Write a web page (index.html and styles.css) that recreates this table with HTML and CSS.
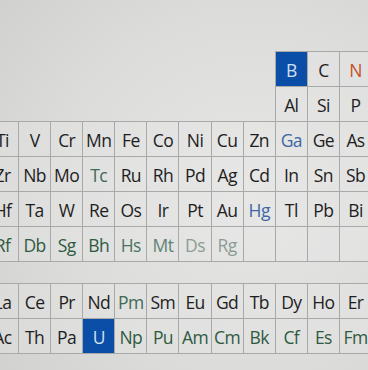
FILE: index.html
```html
<!DOCTYPE html>
<html>
<head>
<meta charset="utf-8">
<link rel="stylesheet" href="styles.css">
</head>
<body>
<div class="page">
  <div class="grid main">
    <div class="cell hl" style="grid-column:10">B</div>
    <div class="cell">C</div>
    <div class="cell orange">N</div>
    <div class="cell" style="grid-column:10">Al</div>
    <div class="cell">Si</div>
    <div class="cell">P</div>

    <div class="cell">Ti</div><div class="cell">V</div><div class="cell">Cr</div><div class="cell">Mn</div>
    <div class="cell">Fe</div><div class="cell">Co</div><div class="cell">Ni</div><div class="cell">Cu</div>
    <div class="cell">Zn</div><div class="cell blue">Ga</div><div class="cell">Ge</div><div class="cell">As</div>

    <div class="cell">Zr</div><div class="cell">Nb</div><div class="cell">Mo</div><div class="cell green1">Tc</div>
    <div class="cell">Ru</div><div class="cell">Rh</div><div class="cell">Pd</div><div class="cell">Ag</div>
    <div class="cell">Cd</div><div class="cell">In</div><div class="cell">Sn</div><div class="cell">Sb</div>

    <div class="cell">Hf</div><div class="cell">Ta</div><div class="cell">W</div><div class="cell">Re</div>
    <div class="cell">Os</div><div class="cell">Ir</div><div class="cell">Pt</div><div class="cell">Au</div>
    <div class="cell blue">Hg</div><div class="cell">Tl</div><div class="cell">Pb</div><div class="cell">Bi</div>

    <div class="cell green">Rf</div><div class="cell green">Db</div><div class="cell green">Sg</div><div class="cell green">Bh</div>
    <div class="cell green2">Hs</div><div class="cell green3">Mt</div><div class="cell faded">Ds</div><div class="cell faded">Rg</div>
    <div class="cell"></div><div class="cell"></div><div class="cell"></div><div class="cell"></div>
  </div>

  <div class="grid series">
    <div class="cell">La</div><div class="cell">Ce</div><div class="cell">Pr</div><div class="cell">Nd</div>
    <div class="cell green1">Pm</div><div class="cell">Sm</div><div class="cell">Eu</div><div class="cell">Gd</div>
    <div class="cell">Tb</div><div class="cell">Dy</div><div class="cell">Ho</div><div class="cell">Er</div>

    <div class="cell">Ac</div><div class="cell">Th</div><div class="cell">Pa</div><div class="cell hl">U</div>
    <div class="cell green">Np</div><div class="cell green">Pu</div><div class="cell green">Am</div><div class="cell green">Cm</div>
    <div class="cell green">Bk</div><div class="cell green">Cf</div><div class="cell green">Es</div><div class="cell green">Fm</div>
  </div>
</div>
</body>
</html>
```
FILE: styles.css
```css
html, body {
  margin: 0;
  padding: 0;
}
body {
  width: 368px;
  height: 370px;
  overflow: hidden;
  background: radial-gradient(ellipse 320px 300px at 68% 52%, #e6e6e5 0%, #dcdcdb 60%, #d1d1cf 100%);
  font-family: "Open Sans", "Noto Sans", sans-serif;
}
.page {
  padding-top: 52px;
  margin-left: -13.1px;
}
.grid {
  display: grid;
  grid-template-columns: repeat(12, 31.1px);
  grid-auto-rows: 34px;
  column-gap: 1px;
  row-gap: 1px;
}
.series {
  margin-top: 23px;
}
.cell {
  outline: 1px solid #a9a9a8;
  display: flex;
  align-items: center;
  justify-content: center;
  padding-top: 2px;
  box-sizing: border-box;
  font-size: 17.5px;
  font-weight: 500;
  color: #1e1e1e;
  letter-spacing: -0.6px;
  background: rgba(232, 232, 231, 0.35);
}
.hl {
  background: #0b4ea8;
  color: #cfe0f5;
}
.orange { color: #c4501f; }
.blue { color: #3d66a6; }
.green { color: #2f5a40; }
.green1 { color: #3f6a56; }
.green2 { color: #4a7361; }
.green3 { color: #5f8474; }
.faded { color: #8c9c95; }
```
